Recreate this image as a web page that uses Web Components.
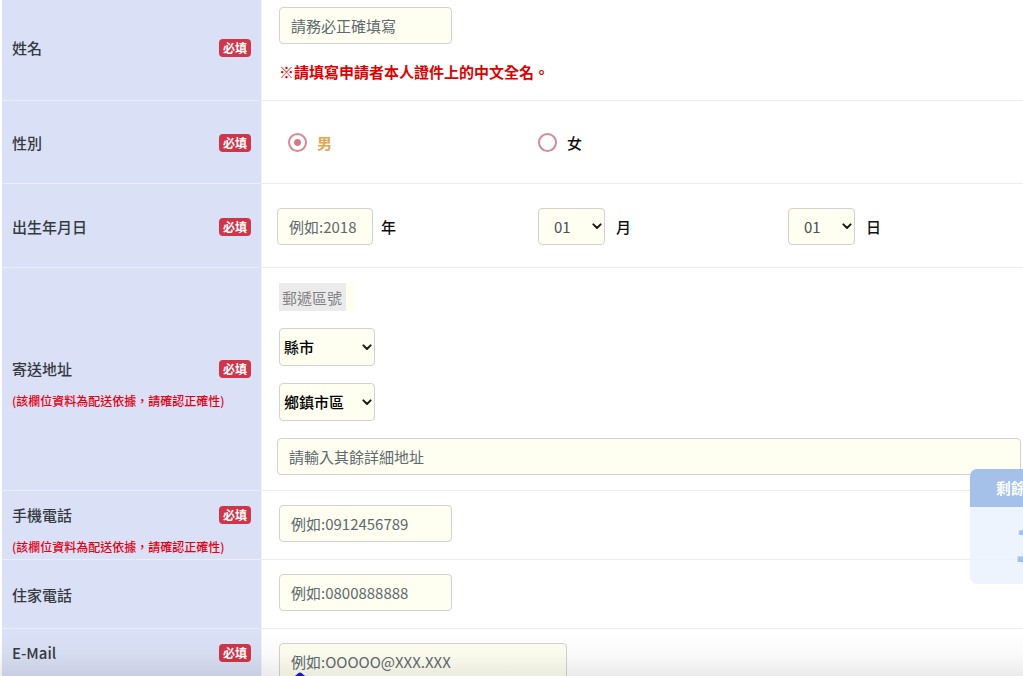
<!DOCTYPE html>
<html lang="zh-Hant">
<head>
<meta charset="utf-8">
<meta name="viewport" content="width=device-width, initial-scale=1">
<title>申請表</title>
<style>
  body {
    margin: 0;
    background: #fff;
    color: #111;
    font: 15px/24px "Noto Sans CJK TC", sans-serif;
  }
</style>
</head>
<body>
<application-form></application-form>

<script>
class RequiredBadge extends HTMLElement {
  constructor() {
    super();
    this.attachShadow({ mode: 'open' });
    this.shadowRoot.innerHTML = `
      <style>
        :host {
          display: block;
          flex: none;
          padding: 0 4px;
          border-radius: 4px;
          background: #d03549;
          color: #fff;
          font-size: 12px;
          font-weight: 700;
          line-height: 18px;
        }
      </style>
      <slot>必填</slot>
    `;
  }
}

class FormRow extends HTMLElement {
  constructor() {
    super();
    this.attachShadow({ mode: 'open' });
    this.shadowRoot.innerHTML = `
      <style>
        :host {
          display: flex;
        }
        .head {
          box-sizing: border-box;
          flex: 0 0 260px;
          display: flex;
          flex-direction: column;
          justify-content: center;
          padding: 2px 10px 0;
          border-right: 1px solid #eef1fa;
          border-bottom: 1px solid #ebeef9;
          background: #dae0f5;
          color: #343a40;
          font-weight: 500;
        }
        :host([noted]) .head {
          padding-top: 10px;
        }
        :host([top]) .head {
          justify-content: flex-start;
          padding-top: 12px;
        }
        .title {
          display: flex;
          align-items: center;
          justify-content: space-between;
        }
        .body {
          flex: 1;
          min-width: 0;
          padding: var(--row-padding, 14px 2px 17px 17px);
          border-bottom: 1px solid #ececee;
        }
      </style>
      <div class="head">
        <div class="title">
          <slot name="label"></slot>
          <slot name="badge"></slot>
        </div>
        <slot name="note"></slot>
      </div>
      <div class="body"><slot></slot></div>
    `;
  }
}

// Wraps a native select and draws the arrow over its right side
class SelectBox extends HTMLElement {
  constructor() {
    super();
    this.attachShadow({ mode: 'open' });
    this.shadowRoot.innerHTML = `
      <style>
        :host {
          display: grid;
          grid-template-columns: 1fr;
          align-items: center;
          width: 96px;
        }
        :host([small]) {
          width: 67px;
        }
        ::slotted(select), svg {
          grid-area: 1 / 1;
        }
        svg {
          width: 10px;
          height: 7px;
          margin-right: 3px;
          justify-self: end;
          pointer-events: none;
          fill: none;
          stroke: #1c1c1c;
          stroke-width: 2;
          stroke-linecap: round;
          stroke-linejoin: round;
        }
      </style>
      <slot></slot>
      <svg viewBox="0 0 10 7"><path d="M1.4 1.4 5 5l3.6-3.6"/></svg>
    `;
  }
}

class RemainingPanel extends HTMLElement {
  constructor() {
    super();
    this.attachShadow({ mode: 'open' });
    this.shadowRoot.innerHTML = `
      <style>
        :host {
          display: block;
          position: fixed;
          right: -67px;
          bottom: 92px;
          width: 120px;
          border-radius: 7px;
          overflow: hidden;
          background: rgba(235, 243, 254, 0.9);
          color: #a5c1e9;
          font-weight: 700;
        }
        .head {
          padding: 7px 26px;
          background: #a5c1e9;
          color: #fff;
        }
        .count {
          padding: 0 0 7px 44px;
          font-size: 46px;
          line-height: 70px;
        }
      </style>
      <div class="head"><slot name="title"></slot></div>
      <div class="count"><slot></slot></div>
    `;
  }
}

class ApplicationForm extends HTMLElement {
  constructor() {
    super();
    this.attachShadow({ mode: 'open' });
  }

  connectedCallback() {
    this.render();
  }

  render() {
    this.shadowRoot.innerHTML = `
      <style>
        :host {
          display: block;
          position: relative;
          height: 100vh;
          overflow: hidden;
        }
        form {
          margin: -7px 0 0 2px;
        }
        input, select {
          box-sizing: border-box;
          margin: 0;
          font: inherit;
        }
        input:not([type="radio"]), select {
          display: block;
          height: 37px;
          border: 1px solid #d0d3d2;
          border-radius: 4px;
          background: #fefff0;
          color: #495057;
        }
        input:not([type="radio"]) {
          width: 173px;
          padding: 0 11px;
        }
        input::placeholder {
          color: #60696f;
          opacity: 1;
        }
        select {
          appearance: none;
          width: 100%;
          padding: 0 15px;
        }
        .note {
          margin-top: 9px;
          color: #e60012;
          font-size: 12px;
          line-height: 22px;
          white-space: nowrap;
        }
        .hint {
          margin: 16px 0 0;
          color: #e00000;
          font-weight: 700;
          line-height: 23px;
        }
        .columns {
          display: grid;
          grid-template-columns: repeat(3, 1fr);
          gap: 6px;
        }
        .column {
          display: flex;
          align-items: center;
          gap: 11px;
          height: 37px;
          padding-left: 11px;
        }
        .column.first {
          gap: 8px;
          padding-left: 0;
        }
        .gender {
          --row-padding: 23px 2px 22px 15px;
        }
        .birth {
          --row-padding: 24px 2px 22px 15px;
        }
        .address {
          --row-padding: 15px 2px 15px 15px;
        }
        .column input[type="radio"] {
          appearance: none;
          width: 19px;
          height: 19px;
          border: 2px solid #d5899a;
          border-radius: 50%;
          background: #fff;
        }
        .column input[type="radio"]:checked {
          background: radial-gradient(circle, #d5798c 3px, #fff 4px);
        }
        .option {
          display: flex;
          align-items: center;
          gap: 10px;
          font-weight: 500;
        }
        .option:has(:checked) {
          color: #e2a650;
          font-weight: 700;
        }
        .unit {
          font-weight: 500;
        }
        .column #year {
          width: 96px;
        }
        .stack {
          display: flex;
          flex-direction: column;
          align-items: flex-start;
          gap: 17px;
        }
        .zip, .stack select-box {
          margin-left: 2px;
        }
        .stack select {
          height: 38px;
          padding: 0 4px;
          color: #000;
          font-weight: 500;
        }
        .zip {
          width: 76px;
          background: #fffff0;
        }
        .zip #zip {
          width: 67px;
          height: 28px;
          padding: 0 3px;
          border: 0;
          border-radius: 0;
          background: #ebebeb;
        }
        #zip::placeholder {
          color: #808080;
        }
        .stack #street {
          width: 100%;
        }
        #email.wide {
          width: 288px;
        }
        .shade {
          position: absolute;
          right: 0;
          bottom: 0;
          left: 0;
          height: 44px;
          background: linear-gradient(rgba(0, 0, 0, 0), rgba(0, 0, 0, 0.02) 50%, rgba(0, 0, 0, 0.08));
          pointer-events: none;
        }
        .pointer {
          position: absolute;
          bottom: 0;
          left: 295px;
          width: 10px;
          height: 4px;
          fill: #1d12c4;
        }
      </style>
      <form>
        <form-row>
          <label slot="label" for="name">姓名</label>
          <required-badge slot="badge"></required-badge>
          <input id="name" type="text" placeholder="請務必正確填寫">
          <p class="hint">※請填寫申請者本人證件上的中文全名。</p>
        </form-row>

        <form-row class="gender">
          <span slot="label" id="gender-label">性別</span>
          <required-badge slot="badge"></required-badge>
          <div class="columns" role="radiogroup" aria-labelledby="gender-label">
            <div class="column"><label class="option"><input type="radio" name="gender" value="m" checked>男</label></div>
            <div class="column"><label class="option"><input type="radio" name="gender" value="f">女</label></div>
          </div>
        </form-row>

        <form-row class="birth">
          <label slot="label" for="year">出生年月日</label>
          <required-badge slot="badge"></required-badge>
          <div class="columns">
            <div class="column first">
              <input id="year" type="text" placeholder="例如:2018">
              <label class="unit" for="year">年</label>
            </div>
            <div class="column">
              <select-box small><select id="month"><option>01</option></select></select-box>
              <label class="unit" for="month">月</label>
            </div>
            <div class="column">
              <select-box small><select id="day"><option>01</option></select></select-box>
              <label class="unit" for="day">日</label>
            </div>
          </div>
        </form-row>

        <form-row class="address" noted>
          <label slot="label" for="street">寄送地址</label>
          <required-badge slot="badge"></required-badge>
          <div slot="note" class="note">(該欄位資料為配送依據，請確認正確性)</div>
          <div class="stack">
            <div class="zip"><input id="zip" type="text" placeholder="郵遞區號" aria-label="郵遞區號" disabled></div>
            <select-box><select aria-label="縣市"><option>縣市</option></select></select-box>
            <select-box><select aria-label="鄉鎮市區"><option>鄉鎮市區</option></select></select-box>
            <input id="street" type="text" placeholder="請輸入其餘詳細地址">
          </div>
        </form-row>

        <form-row noted>
          <label slot="label" for="mobile">手機電話</label>
          <required-badge slot="badge"></required-badge>
          <div slot="note" class="note">(該欄位資料為配送依據，請確認正確性)</div>
          <input id="mobile" type="tel" placeholder="例如:0912456789">
        </form-row>

        <form-row>
          <label slot="label" for="phone">住家電話</label>
          <input id="phone" type="tel" placeholder="例如:0800888888">
        </form-row>

        <form-row top>
          <label slot="label" for="email">E-Mail</label>
          <required-badge slot="badge"></required-badge>
          <input id="email" class="wide" type="email" placeholder="例如:OOOOO@XXX.XXX">
        </form-row>
      </form>

      <div class="shade"></div>
      <svg class="pointer" viewBox="0 0 10 4"><path d="M0 4 3.5 1Q5-.2 6.500 1L10 4z"/></svg>

      <remaining-panel>
        <span slot="title">剩餘</span>
        1
      </remaining-panel>
    `;
  }
}

customElements.define('required-badge', RequiredBadge);
customElements.define('form-row', FormRow);
customElements.define('select-box', SelectBox);
customElements.define('remaining-panel', RemainingPanel);
customElements.define('application-form', ApplicationForm);
</script>
</body>
</html>
